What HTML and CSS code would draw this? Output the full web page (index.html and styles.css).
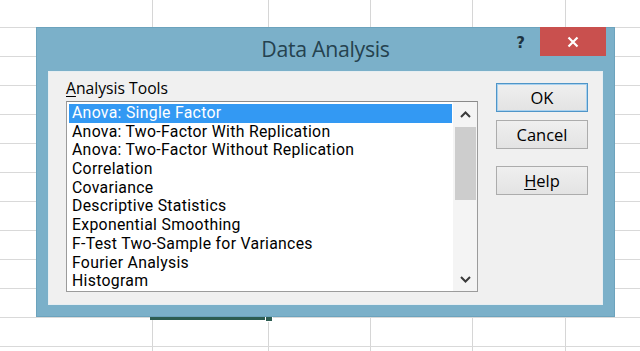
FILE: index.html
```html
<!DOCTYPE html>
<html lang="en">
<head>
<meta charset="utf-8">
<title>Data Analysis</title>
<link rel="stylesheet" href="styles.css">
</head>
<body>
<div class="sheet">
  <div class="selection"><span class="fill-handle"></span></div>
  <div class="dialog">
    <div class="titlebar">
      <span class="spacer"></span>
      <span class="title">Data Analysis</span>
      <span class="controls">
        <span class="help">?</span>
        <span class="close">
          <svg width="12" height="12" viewBox="0 0 12 12"><path d="M1.5 1.5 L10.5 10.5 M10.5 1.5 L1.5 10.5" stroke="#fff" stroke-width="2.2" fill="none"/></svg>
        </span>
      </span>
    </div>
    <div class="client">
      <div class="tools">
        <div class="label"><u>A</u>nalysis Tools</div>
        <div class="listbox">
          <ul class="items">
            <li class="item selected">Anova: Single Factor</li>
            <li class="item">Anova: Two-Factor With Replication</li>
            <li class="item">Anova: Two-Factor Without Replication</li>
            <li class="item">Correlation</li>
            <li class="item">Covariance</li>
            <li class="item">Descriptive Statistics</li>
            <li class="item">Exponential Smoothing</li>
            <li class="item">F-Test Two-Sample for Variances</li>
            <li class="item">Fourier Analysis</li>
            <li class="item">Histogram</li>
          </ul>
          <div class="scrollbar">
            <span class="arrow">
              <svg width="11" height="7" viewBox="0 0 11 7"><path d="M1 6 L5.5 1.5 L10 6" stroke="#3a3a3a" stroke-width="2" fill="none"/></svg>
            </span>
            <span class="track"><span class="thumb"></span></span>
            <span class="arrow">
              <svg width="11" height="7" viewBox="0 0 11 7"><path d="M1 1 L5.5 5.5 L10 1" stroke="#3a3a3a" stroke-width="2" fill="none"/></svg>
            </span>
          </div>
        </div>
      </div>
      <div class="buttons">
        <span class="btn default">OK</span>
        <span class="btn">Cancel</span>
        <span class="btn help-btn"><u>H</u>elp</span>
      </div>
    </div>
  </div>
</div>
</body>
</html>
```

FILE: styles.css
```css
html, body {
  margin: 0;
  padding: 0;
}

body {
  width: 640px;
  height: 351px;
  overflow: hidden;
  background: #ffffff;
  font-family: "Open Sans", "Noto Sans", sans-serif;
}

.sheet {
  position: relative;
  width: 640px;
  height: 351px;
  background-color: #ffffff;
  background-image:
    repeating-linear-gradient(to bottom, transparent 0, transparent 27px, #d9d9d9 27px, #d9d9d9 28px, transparent 28px, transparent 29px),
    linear-gradient(#d6d6d6, #d6d6d6),
    linear-gradient(#d6d6d6, #d6d6d6),
    linear-gradient(#d6d6d6, #d6d6d6),
    linear-gradient(#d6d6d6, #d6d6d6),
    linear-gradient(#d6d6d6, #d6d6d6);
  background-size: 100% 100%, 1px 100%, 1px 100%, 1px 100%, 1px 100%, 1px 100%;
  background-position: 0 0, 152px 0, 268px 0, 370px 0, 472px 0, 565px 0;
  background-repeat: no-repeat;
}

.selection {
  position: absolute;
  left: 150px;
  top: 286px;
  width: 111px;
  height: 28px;
  border: 3px solid #2d5d52;
}

.fill-handle {
  position: absolute;
  right: -9px;
  bottom: -5px;
  width: 6px;
  height: 5px;
  background: #2d5d52;
  border: 1px solid #ffffff;
}

.dialog {
  position: absolute;
  left: 36px;
  top: 27px;
  width: 579px;
  height: 290px;
  box-sizing: border-box;
  background: #7bb0c9;
  border: 1px solid #6ca3bd;
  display: flex;
  flex-direction: column;
}

.titlebar {
  height: 43px;
  display: grid;
  grid-template-columns: 1fr auto 1fr;
  align-items: start;
}

.title {
  padding-top: 7px;
  font-size: 21.3px;
  line-height: 27px;
  color: #25424f;
  letter-spacing: -0.3px;
}

.controls {
  display: flex;
  justify-content: flex-end;
  align-items: flex-start;
}

.help {
  margin-top: 5px;
  margin-right: 15px;
  font-family: "DejaVu Sans", sans-serif;
  font-weight: bold;
  font-size: 15px;
  line-height: 20px;
  color: #1d3340;
}

.close {
  width: 66px;
  height: 29px;
  margin-top: -1px;
  margin-right: 8px;
  background: #c9504e;
  display: flex;
  align-items: center;
  justify-content: center;
}

.client {
  flex: 1;
  margin: 0 11px 11px 11px;
  background: #f0f0f0;
  border: 1px solid #e6eef2;
  display: flex;
  padding: 6px 14px 0 17px;
  gap: 18px;
}

.tools {
  width: 412px;
  display: flex;
  flex-direction: column;
}

.label {
  font-size: 15.7px;
  line-height: 20px;
  color: #000;
  margin-bottom: 3px;
}

.label u, .help-btn u {
  text-decoration-thickness: 1px;
  text-underline-offset: 2px;
}

.listbox {
  height: 191px;
  box-sizing: border-box;
  border: 1px solid #9b9b9b;
  border-top-color: #8a8a8a;
  background: #ffffff;
  display: flex;
}

.items {
  list-style: none;
  margin: 0;
  padding: 2px 0 0 2px;
  flex: 1;
  min-width: 0;
}

.item {
  height: 18.7px;
  line-height: 18.7px;
  padding-left: 3px;
  font-family: Roboto, "Open Sans", sans-serif;
  font-size: 15.8px;
  letter-spacing: 0.3px;
  color: #000;
  white-space: nowrap;
}

.item.selected {
  background: #3399f3;
  color: #ffffff;
}

.scrollbar {
  width: 24px;
  flex: none;
  background: #f4f4f4;
  display: flex;
  flex-direction: column;
  margin-left: 1px;
}

.arrow {
  height: 24px;
  display: flex;
  align-items: center;
  justify-content: center;
}

.track {
  flex: 1;
  display: flex;
  justify-content: center;
  padding-top: 1px;
}

.thumb {
  width: 21px;
  height: 73px;
  background: #cdcdcd;
}

.buttons {
  display: flex;
  flex-direction: column;
  padding-top: 5px;
  gap: 8px;
}

.btn {
  width: 92px;
  height: 29px;
  box-sizing: border-box;
  border: 1px solid #acacac;
  background: linear-gradient(#efefef, #e3e3e3);
  display: flex;
  align-items: center;
  justify-content: center;
  font-size: 16.5px;
  color: #000;
}

.btn.default {
  border: 1px solid #4f95c8;
  box-shadow: inset 0 0 0 1px #a9d1ee;
}

.help-btn {
  margin-top: 9px;
}
```
